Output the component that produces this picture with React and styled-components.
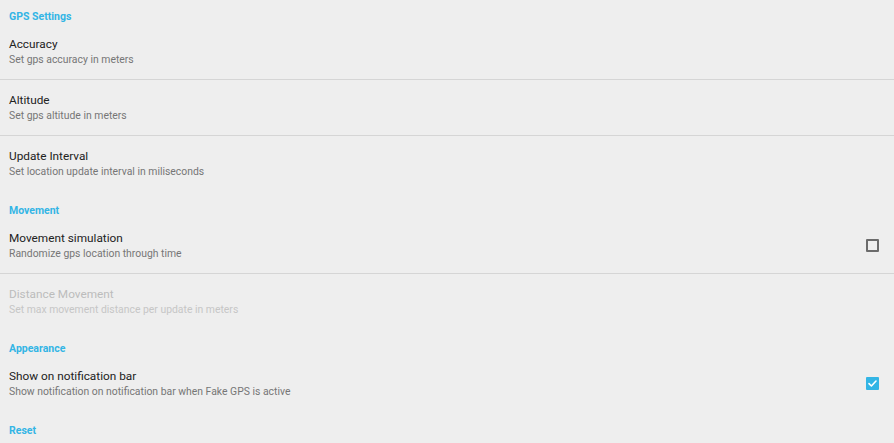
import React from "react";
import styled, { createGlobalStyle } from "styled-components";

const Global = createGlobalStyle`
  html, body { margin: 0; padding: 0; background: #eeeeee; }
  body { font-family: Roboto, "Noto Sans", sans-serif; -webkit-font-smoothing: antialiased; }
`;

const Screen = styled.div`
  width: 894px;
  height: 443px;
  overflow: hidden;
  background: #eeeeee;
  display: flex;
  flex-direction: column;
`;

const Header = styled.div`
  height: ${(p) => (p.$first ? 24 : 26)}px;
  flex: none;
  display: flex;
  align-items: flex-end;
  padding: 0 0 1px 9px;
  box-sizing: border-box;
  font-size: 10.5px;
  line-height: 12px;
  font-weight: 700;
  color: #33b5e5;
`;

const Row = styled.div`
  height: 56px;
  flex: none;
  box-sizing: border-box;
  display: flex;
  align-items: center;
  padding: 0 15px 0 9px;
  border-bottom: 1px solid ${(p) => (p.$divider ? "#d5d5d5" : "transparent")};
`;

const Texts = styled.div`
  flex: 1;
  align-self: flex-start;
  padding-top: 12px;
  display: flex;
  flex-direction: column;
`;

const Title = styled.div`
  font-size: 11.8px;
  line-height: 16px;
  color: ${(p) => (p.$disabled ? "#bcbcbc" : "#222222")};
`;

const Summary = styled.div`
  margin-top: 1px;
  font-size: 10.4px;
  line-height: 14px;
  color: ${(p) => (p.$disabled ? "#c6c6c6" : "#767676")};
`;

const Box = styled.div`
  width: 13px;
  height: 13px;
  box-sizing: border-box;
  border-radius: 1px;
  margin-top: -1px;
  display: flex;
  align-items: center;
  justify-content: center;
  border: ${(p) => (p.$checked ? "none" : "2px solid #6b6b6b")};
  background: ${(p) => (p.$checked ? "#33b5e5" : "transparent")};
`;

const Check = ({ checked }) => (
  <Box $checked={checked}>
    {checked && (
      <svg width="11" height="11" viewBox="0 0 11 11">
        <path d="M2 5.6 L4.4 8 L9 3" fill="none" stroke="#fff" strokeWidth="1.6" strokeLinecap="round" strokeLinejoin="round" />
      </svg>
    )}
  </Box>
);

const Pref = ({ title, summary, divider, disabled, checkbox, checked }) => (
  <Row $divider={divider}>
    <Texts>
      <Title $disabled={disabled}>{title}</Title>
      <Summary $disabled={disabled}>{summary}</Summary>
    </Texts>
    {checkbox && <Check checked={checked} />}
  </Row>
);

export default function App() {
  return (
    <>
      <Global />
      <Screen>
        <Header $first>GPS Settings</Header>
        <Pref title="Accuracy" summary="Set gps accuracy in meters" divider />
        <Pref title="Altitude" summary="Set gps altitude in meters" divider />
        <Pref title="Update Interval" summary="Set location update interval in miliseconds" />
        <Header>Movement</Header>
        <Pref title="Movement simulation" summary="Randomize gps location through time" divider checkbox />
        <Pref title="Distance Movement" summary="Set max movement distance per update in meters" disabled />
        <Header>Appearance</Header>
        <Pref title="Show on notification bar" summary="Show notification on notification bar when Fake GPS is active" checkbox checked />
        <Header>Reset</Header>
      </Screen>
    </>
  );
}
